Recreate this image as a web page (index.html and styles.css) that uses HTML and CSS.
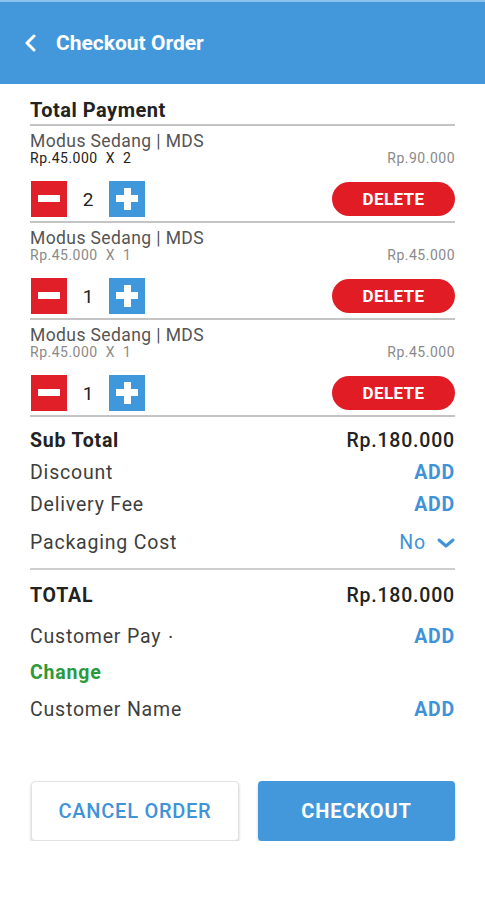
FILE: index.html
```html
<!DOCTYPE html>
<html>
<head>
<meta charset="utf-8">
<link rel="stylesheet" href="styles.css">
</head>
<body>
<header class="appbar">
  <svg class="back" width="14" height="18" viewBox="0 0 14 18"><path d="M10 2 L3 9 L10 16" fill="none" stroke="#fff" stroke-width="3" stroke-linecap="round" stroke-linejoin="round"/></svg>
  <span class="title">Checkout Order</span>
</header>
<main class="content">
  <div class="section-title">Total Payment</div>

  <div class="item">
    <div class="item-name">Modus Sedang | MDS</div>
    <div class="item-price"><span class="unit dark">Rp.45.000&nbsp; X&nbsp; 2</span><span class="sum">Rp.90.000</span></div>
    <div class="item-actions">
      <div class="qty">
        <span class="btn-minus"><i></i></span>
        <span class="count">2</span>
        <span class="btn-plus"><i class="h"></i><i class="v"></i></span>
      </div>
      <span class="delete">DELETE</span>
    </div>
  </div>

  <div class="item">
    <div class="item-name">Modus Sedang | MDS</div>
    <div class="item-price"><span class="unit">Rp.45.000&nbsp; X&nbsp; 1</span><span class="sum">Rp.45.000</span></div>
    <div class="item-actions">
      <div class="qty">
        <span class="btn-minus"><i></i></span>
        <span class="count">1</span>
        <span class="btn-plus"><i class="h"></i><i class="v"></i></span>
      </div>
      <span class="delete">DELETE</span>
    </div>
  </div>

  <div class="item">
    <div class="item-name">Modus Sedang | MDS</div>
    <div class="item-price"><span class="unit">Rp.45.000&nbsp; X&nbsp; 1</span><span class="sum">Rp.45.000</span></div>
    <div class="item-actions">
      <div class="qty">
        <span class="btn-minus"><i></i></span>
        <span class="count">1</span>
        <span class="btn-plus"><i class="h"></i><i class="v"></i></span>
      </div>
      <span class="delete">DELETE</span>
    </div>
  </div>

  <section class="summary">
    <div class="row strong"><span>Sub Total</span><span class="amount">Rp.180.000</span></div>
    <div class="row"><span>Discount</span><span class="add">ADD</span></div>
    <div class="row"><span>Delivery Fee</span><span class="add">ADD</span></div>
    <div class="row packaging"><span>Packaging Cost</span><span class="select">No <svg width="20" height="12" viewBox="0 0 20 12"><path d="M3 3 L10 9 L17 3" fill="none" stroke="#3f93d8" stroke-width="3" stroke-linecap="round" stroke-linejoin="round"/></svg></span></div>
  </section>

  <section class="totals">
    <div class="row strong total"><span>TOTAL</span><span class="amount">Rp.180.000</span></div>
    <div class="row pay"><span>Customer Pay <small>•</small></span><span class="add">ADD</span></div>
    <div class="row change"><span>Change</span></div>
    <div class="row name"><span>Customer Name</span><span class="add">ADD</span></div>
  </section>

  <div class="actions">
    <button class="btn cancel">CANCEL ORDER</button>
    <button class="btn checkout">CHECKOUT</button>
  </div>
</main>
</body>
</html>
```

FILE: styles.css
```css
* { box-sizing: border-box; }
html, body { margin: 0; padding: 0; background: #fff; }
body {
  width: 485px;
  font-family: Roboto, "Noto Sans", "Liberation Sans", sans-serif;
  color: #333;
}

.appbar {
  height: 84px;
  background: #4398db;
  border-top: 2px solid #8cc2ee;
  display: flex;
  align-items: center;
  padding-left: 24px;
  gap: 18px;
}
.appbar .back { flex: none; margin-top: -1px; }
.appbar .title {
  color: #fff;
  font-size: 21px;
  font-weight: 700;
}

.content { padding: 0 30px; }

.section-title {
  margin-top: 15px;
  font-size: 20px;
  line-height: 22px;
  font-weight: 700;
  letter-spacing: 0.5px;
  color: #222;
  padding-bottom: 3px;
  border-bottom: 2px solid #c4c4c4;
}

.item {
  padding-top: 5px;
  border-bottom: 2px solid #c4c4c4;
}
.item-name {
  font-size: 17.5px;
  line-height: 20px;
  letter-spacing: 0.4px;
  color: #555;
}
.item-price {
  display: flex;
  justify-content: space-between;
  font-size: 14px;
  line-height: 15px;
  letter-spacing: 0.5px;
  color: #8a8a8a;
}
.item-price .unit.dark { color: #222; }
.item-actions {
  display: flex;
  justify-content: space-between;
  align-items: center;
  margin-top: 15px;
  margin-bottom: 4px;
  height: 36px;
}
.qty { display: flex; align-items: center; padding-left: 1px; }
.btn-minus, .btn-plus {
  position: relative;
  width: 36px;
  height: 36px;
  display: inline-block;
}
.btn-minus { background: #e01f28; }
.btn-plus { background: #3f97dc; }
.btn-minus i {
  position: absolute;
  left: 7px; top: 14px;
  width: 22px; height: 7px;
  background: #fff;
}
.btn-plus i { position: absolute; background: #fff; }
.btn-plus i.h { left: 7px; top: 14px; width: 22px; height: 7px; }
.btn-plus i.v { left: 14.5px; top: 7px; width: 7px; height: 22px; }
.count {
  width: 42px;
  text-align: center;
  font-size: 19px;
  color: #222;
}
.delete {
  width: 123px;
  height: 34px;
  border-radius: 17px;
  background: #e21c25;
  color: #fff;
  font-weight: 700;
  font-size: 17px;
  letter-spacing: 0.4px;
  display: flex;
  align-items: center;
  justify-content: center;
}

.row {
  display: flex;
  justify-content: space-between;
  align-items: center;
  height: 32px;
  font-size: 19.5px;
  letter-spacing: 0.8px;
  color: #3e3e3e;
}
.row.strong { color: #222; font-weight: 700; }
.row .amount { font-weight: 500; color: #222; }
.row .add { color: #3f93d8; font-weight: 700; }

.summary {
  padding-top: 7px;
  border-bottom: 2px solid #cfcfcf;
}
.packaging {
  margin-top: 6px;
  margin-bottom: 10px;
}
.select {
  display: flex;
  align-items: center;
  gap: 10px;
  color: #3f93d8;
}
.select svg { margin-right: -1px; margin-top: 1px; }

.totals { padding-top: 7px; }
.totals .row { height: 36px; }
.totals .total { margin-bottom: 5px; }
.totals .name { margin-top: 1px; }
.row.pay small { font-size: 11px; vertical-align: 2px; margin-left: 2px; }
.row.change { color: #2a9a3c; font-weight: 700; }

.actions {
  display: flex;
  gap: 19px;
  margin-top: 54px;
  padding-left: 1px;
}
.btn {
  height: 60px;
  border-radius: 4px;
  font-family: Roboto, "Noto Sans", "Liberation Sans", sans-serif;
  font-size: 20px;
  font-weight: 500;
  cursor: pointer;
}
.btn.cancel {
  width: 208px;
  background: #fff;
  color: #3f93d8;
  letter-spacing: 0.75px;
  border: 1px solid #e2e2e2;
  box-shadow: 0 2px 3px rgba(0,0,0,0.2);
}
.btn.checkout {
  width: 197px;
  background: #4398db;
  color: #fff;
  border: none;
  font-weight: 700;
  letter-spacing: 0.9px;
  box-shadow: 0 2px 3px rgba(0,0,0,0.2);
}
```
